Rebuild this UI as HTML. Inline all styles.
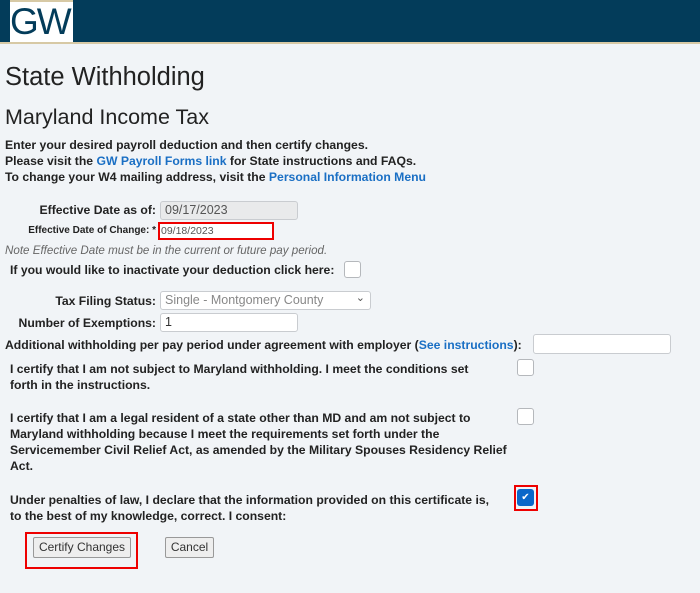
<!DOCTYPE html>
<html><head><style>
*{margin:0;padding:0;box-sizing:border-box}
body{width:700px;height:593px;background:#f1f4f7;font-family:"Liberation Sans",sans-serif;color:#222;position:relative;overflow:hidden}
.a{position:absolute;white-space:nowrap}
.b{font-weight:bold;font-size:12.2px;line-height:16px}
.lk{color:#1a6fc4}
.in{position:absolute;background:#fff;border:1px solid #c9ccd0;border-radius:3px;font-size:12.5px;color:#555;padding-left:4px;line-height:17px}
.cb{position:absolute;width:17px;height:17px;background:#fff;border:1px solid #b5b8bc;border-radius:3px}
.r{text-align:right;width:156px;left:0}
.t{font-size:12.2px;font-weight:bold;line-height:16px;position:absolute;left:10px;white-space:nowrap}
.btn{position:absolute;border:1px solid #999;background:#eee;font-size:12px;color:#333;text-align:center;line-height:19px;border-radius:2px}
</style></head><body>
<div class="a" style="left:0;top:0;width:700px;height:42px;background:#033c5a"></div>
<div class="a" style="left:0;top:42px;width:700px;height:2px;background:#d7c9a5"></div>
<div class="a" style="left:10px;top:0;width:63px;height:42px;background:#fff;border-top:2px solid #d7c9a5;overflow:hidden"><div style="position:absolute;left:0;top:1px;font-size:37px;color:#033c5a;letter-spacing:-2px;line-height:38px">GW</div></div>
<div class="a" style="left:5px;top:63px;font-size:25.5px;color:#222">State Withholding</div>
<div class="a" style="left:5px;top:105px;font-size:21.5px;color:#222">Maryland Income Tax</div>
<div class="a b" style="left:5px;top:137px">Enter your desired payroll deduction and then certify changes.</div>
<div class="a b" style="left:5px;top:153px">Please visit the <span class="lk">GW Payroll Forms link</span> for State instructions and FAQs.</div>
<div class="a b" style="left:5px;top:169px">To change your W4 mailing address, visit the <span class="lk">Personal Information Menu</span></div>
<div class="a b r" style="top:202px">Effective Date as of:</div>
<div class="in" style="left:160px;top:201px;width:138px;height:19px;background:#e9eaeb">09/17/2023</div>
<div class="a r" style="top:225px;font-size:10px;font-weight:bold">Effective Date of Change: *</div>
<div class="in" style="left:158px;top:222px;width:116px;height:18px;border:2px solid #e00;border-radius:0;font-size:10.5px;padding-left:1px;line-height:14px">09/18/2023</div>
<div class="a" style="left:5px;top:244px;font-size:11.6px;font-style:italic;color:#666">Note Effective Date must be in the current or future pay period.</div>
<div class="a b" style="left:10px;top:262px">If you would like to inactivate your deduction click here:</div>
<div class="cb" style="left:344px;top:261px"></div>
<div class="a b r" style="top:293px">Tax Filing Status:</div>
<div class="in" style="left:160px;top:291px;width:211px;height:19px;color:#888">Single - Montgomery County<span style="position:absolute;right:5px;top:-2px;font-size:11px;color:#555">&#8964;</span></div>
<div class="a b r" style="top:315px">Number of Exemptions:</div>
<div class="in" style="left:160px;top:313px;width:138px;height:19px;color:#333">1</div>
<div class="a b" style="left:5px;top:337px">Additional withholding per pay period under agreement with employer (<span class="lk">See instructions</span>):</div>
<div class="in" style="left:533px;top:334px;width:138px;height:20px"></div>
<div class="t" style="top:361px">I certify that I am not subject to Maryland withholding. I meet the conditions set<br>forth in the instructions.</div>
<div class="cb" style="left:517px;top:359px"></div>
<div class="t" style="top:410px">I certify that I am a legal resident of a state other than MD and am not subject to<br>Maryland withholding because I meet the requirements set forth under the<br>Servicemember Civil Relief Act, as amended by the Military Spouses Residency Relief<br>Act.</div>
<div class="cb" style="left:517px;top:408px"></div>
<div class="t" style="top:492px">Under penalties of law, I declare that the information provided on this certificate is,<br>to the best of my knowledge, correct. I consent:</div>
<div class="a" style="left:514px;top:485px;width:24px;height:26px;border:2px solid #e00"></div>
<div class="a" style="left:517px;top:489px;width:17px;height:17px;background:#0b67c9;border-radius:3px;color:#fff;font-size:10px;text-align:center;line-height:17px">&#10004;</div>
<div class="a" style="left:25px;top:532px;width:113px;height:37px;border:2px solid #e00"></div>
<div class="btn" style="left:33px;top:537px;width:98px;height:21px">Certify Changes</div>
<div class="btn" style="left:165px;top:537px;width:49px;height:21px">Cancel</div>
</body></html>
